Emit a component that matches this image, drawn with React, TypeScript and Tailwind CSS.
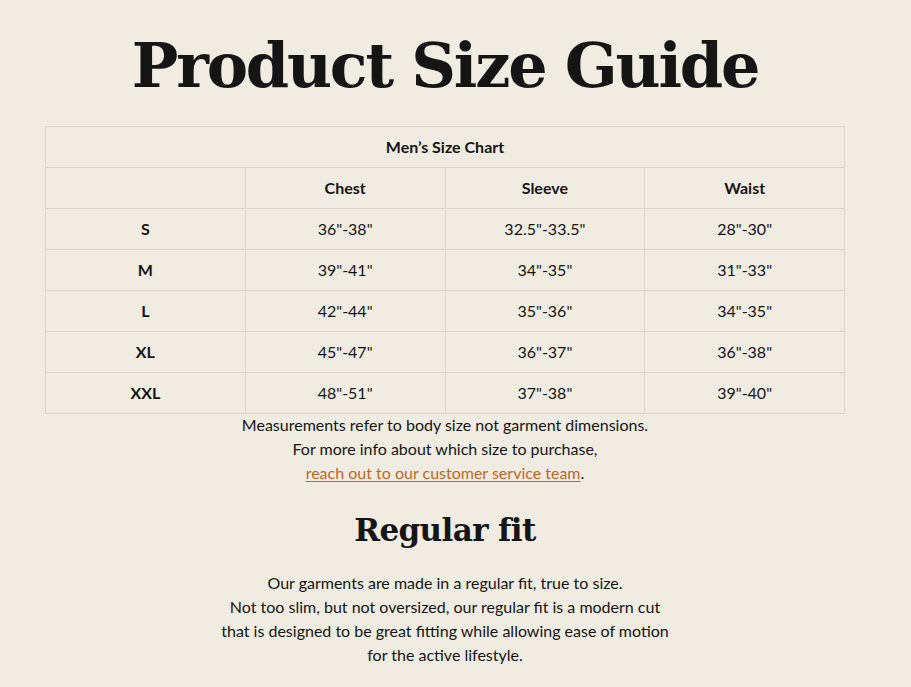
import React from 'react';

const rows = [
  { size: 'S', chest: '36"-38"', sleeve: '32.5"-33.5"', waist: '28"-30"' },
  { size: 'M', chest: '39"-41"', sleeve: '34"-35"', waist: '31"-33"' },
  { size: 'L', chest: '42"-44"', sleeve: '35"-36"', waist: '34"-35"' },
  { size: 'XL', chest: '45"-47"', sleeve: '36"-37"', waist: '36"-38"' },
  { size: 'XXL', chest: '48"-51"', sleeve: '37"-38"', waist: '39"-40"' },
];

const cell = 'h-[41px] border border-[#dcd7cc] text-center align-middle';

const App: React.FC = () => {
  return (
    <div className="min-h-[687px] bg-[#f1ece1] text-[#141414] font-['Lato',sans-serif]">
      <div className="w-[890px] flex flex-col items-center pt-[26px]">
        <h1 className="font-['DejaVu_Serif',serif] font-bold text-[62px] leading-[80px] tracking-[-2.2px] text-[#151515]">
          Product Size Guide
        </h1>

        {/* Size chart */}
        <table className="mt-[20px] w-[800px] border-collapse table-fixed text-[16px]">
          <thead>
            <tr>
              <th colSpan={4} className={`${cell} font-bold`}>Men’s Size Chart</th>
            </tr>
            <tr>
              <th className={cell}></th>
              <th className={`${cell} font-bold`}>Chest</th>
              <th className={`${cell} font-bold`}>Sleeve</th>
              <th className={`${cell} font-bold`}>Waist</th>
            </tr>
          </thead>
          <tbody>
            {rows.map((r) => (
              <tr key={r.size}>
                <td className={`${cell} font-bold`}>{r.size}</td>
                <td className={cell}>{r.chest}</td>
                <td className={cell}>{r.sleeve}</td>
                <td className={cell}>{r.waist}</td>
              </tr>
            ))}
          </tbody>
        </table>

        <div className="-mt-[1px] text-center text-[16px] leading-[24px]">
          <p>Measurements refer to body size not garment dimensions.</p>
          <p>For more info about which size to purchase,</p>
          <p>
            <a href="#" className="text-[#c4651d] underline underline-offset-2">reach out to our customer service team</a>.
          </p>
        </div>

        <h2 className="mt-[25px] font-['DejaVu_Serif',serif] font-bold text-[31px] leading-[40px] tracking-[-0.6px] text-[#151515]">
          Regular fit
        </h2>

        <div className="mt-[21px] text-center text-[16px] leading-[24px]">
          <p>Our garments are made in a regular fit, true to size.</p>
          <p>Not too slim, but not oversized, our regular fit is a modern cut</p>
          <p>that is designed to be great fitting while allowing ease of motion</p>
          <p>for the active lifestyle.</p>
        </div>
      </div>
    </div>
  );
};

export default App;
